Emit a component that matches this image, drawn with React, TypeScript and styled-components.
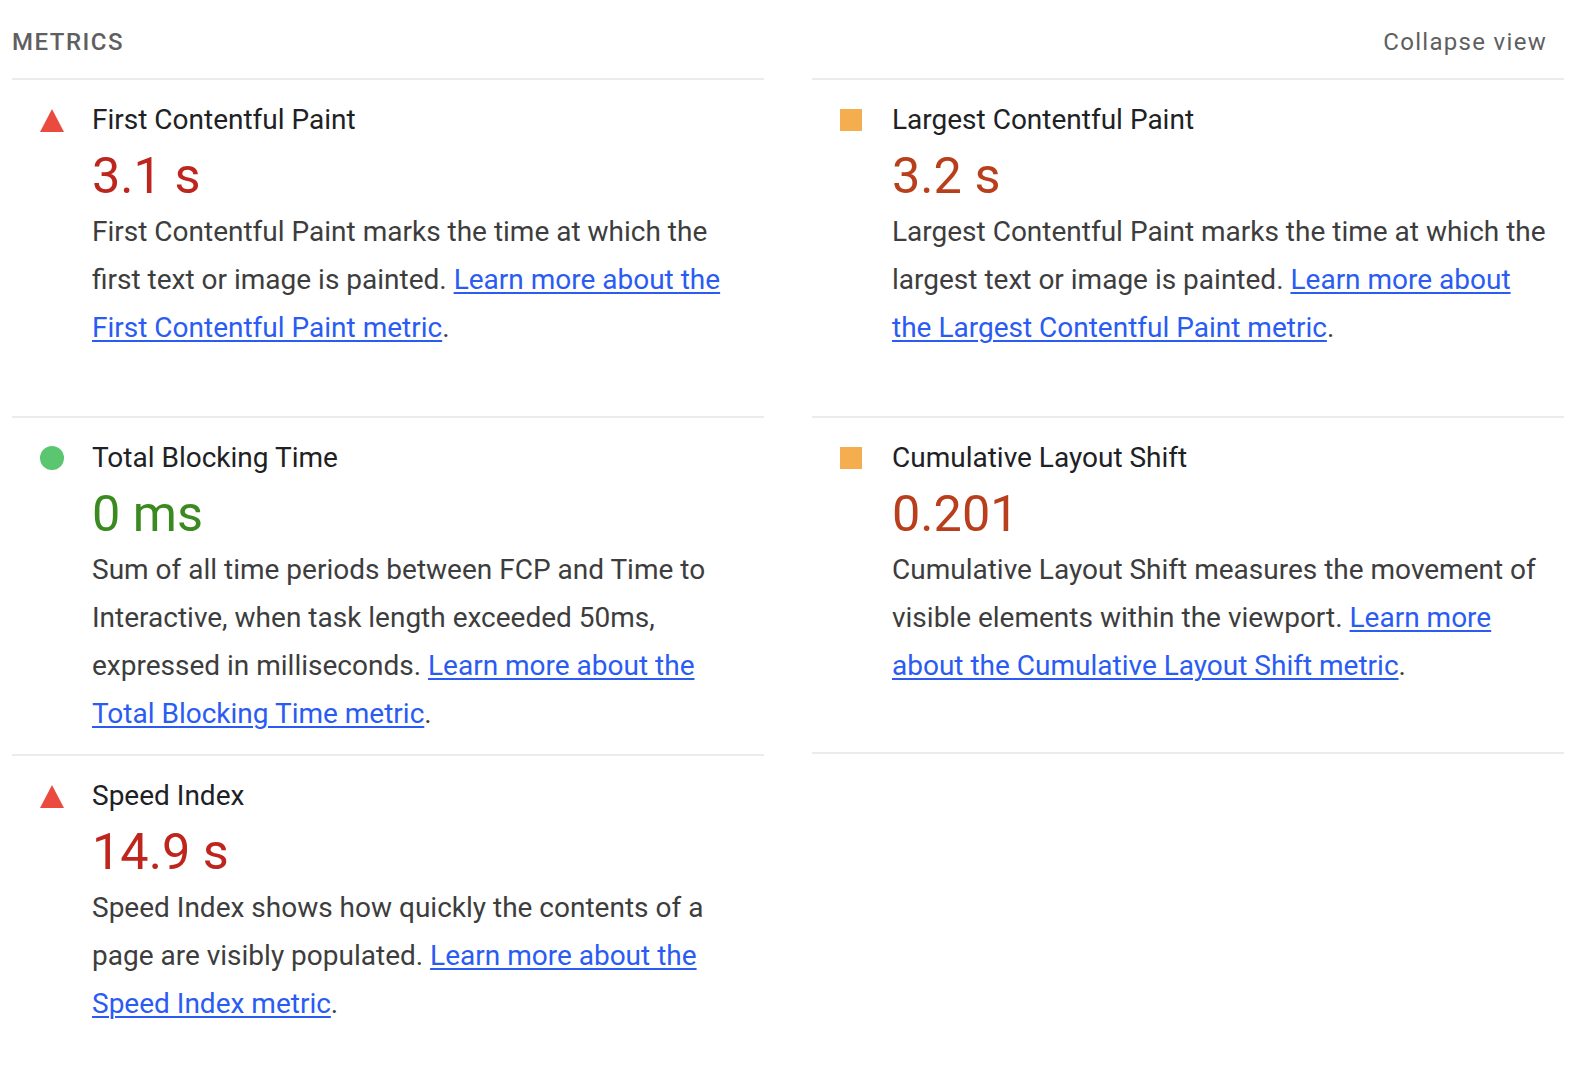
import styled, { createGlobalStyle } from 'styled-components';

const GlobalStyle = createGlobalStyle`
  html, body {
    margin: 0;
    padding: 0;
    background: #ffffff;
  }
  body {
    font-family: Roboto, 'Liberation Sans', Arial, sans-serif;
    -webkit-font-smoothing: antialiased;
  }
`;

type Rating = 'fail' | 'average' | 'pass';

const iconColors: Record<Rating, string> = {
  fail: '#eb4a3f',
  average: '#f4ae4f',
  pass: '#5ac66f',
};

const valueColors: Record<Rating, string> = {
  fail: '#bd251d',
  average: '#b93f1c',
  pass: '#3a8a20',
};

const Page = styled.div`
  padding: 0 22px 0 12px;
`;

const Header = styled.div`
  display: flex;
  justify-content: space-between;
  align-items: center;
  padding: 18px 0 12px;
  line-height: 48px;
`;

const GroupTitle = styled.span`
  font-size: 24px;
  font-weight: 500;
  letter-spacing: 1.5px;
  text-transform: uppercase;
  color: #5f5f5f;
`;

const ToggleButton = styled.button`
  appearance: none;
  background: transparent;
  border: none;
  cursor: pointer;
  padding: 0 17px 0 0;
  font-family: inherit;
  font-size: 24px;
  line-height: 48px;
  letter-spacing: 1.3px;
  color: #5f5f5f;
`;

const Grid = styled.div`
  display: grid;
  grid-template-columns: 1fr 1fr;
  grid-auto-rows: 1fr;
  column-gap: 48px;
`;

const Metric = styled.div<{ $last?: boolean }>`
  display: grid;
  grid-template-columns: 80px 1fr;
  align-content: start;
  border-top: 2px solid #ebebeb;
  border-bottom: ${(p) => (p.$last ? '2px solid #ebebeb' : 'none')};
  padding: 16px 12px 16px 0;
  line-height: 48px;
`;

const IconCell = styled.div`
  display: flex;
  align-items: center;
  height: 48px;
  padding-left: 28px;
`;

const Triangle = styled.div`
  width: 0;
  height: 0;
  border-left: 12px solid transparent;
  border-right: 12px solid transparent;
  border-bottom: 23px solid ${iconColors.fail};
`;

const Square = styled.div`
  width: 22px;
  height: 22px;
  background: ${iconColors.average};
`;

const Circle = styled.div`
  width: 24px;
  height: 24px;
  border-radius: 50%;
  background: ${iconColors.pass};
`;

const Title = styled.div`
  font-size: 28px;
  color: #202124;
`;

const Value = styled.div<{ $rating: Rating }>`
  grid-column: 2;
  margin: 8px 0;
  font-size: 50.4px;
  line-height: 48px;
  color: ${(p) => valueColors[p.$rating]};
`;

const Description = styled.div`
  grid-column: 2;
  font-size: 28px;
  line-height: 48px;
  color: #3d3d3d;
`;

const LearnLink = styled.a`
  color: #2a5cf3;
  text-decoration: underline;
  text-underline-offset: 3px;
  text-decoration-thickness: 2px;
`;

interface MetricData {
  title: string;
  value: string;
  rating: Rating;
  text: string;
  link: string;
}

const metrics: MetricData[] = [
  {
    title: 'First Contentful Paint',
    value: '3.1 s',
    rating: 'fail',
    text: 'First Contentful Paint marks the time at which the first text or image is painted. ',
    link: 'Learn more about the First Contentful Paint metric',
  },
  {
    title: 'Largest Contentful Paint',
    value: '3.2 s',
    rating: 'average',
    text: 'Largest Contentful Paint marks the time at which the largest text or image is painted. ',
    link: 'Learn more about the Largest Contentful Paint metric',
  },
  {
    title: 'Total Blocking Time',
    value: '0 ms',
    rating: 'pass',
    text: 'Sum of all time periods between FCP and Time to Interactive, when task length exceeded 50ms, expressed in milliseconds. ',
    link: 'Learn more about the Total Blocking Time metric',
  },
  {
    title: 'Cumulative Layout Shift',
    value: '0.201',
    rating: 'average',
    text: 'Cumulative Layout Shift measures the movement of visible elements within the viewport. ',
    link: 'Learn more about the Cumulative Layout Shift metric',
  },
  {
    title: 'Speed Index',
    value: '14.9 s',
    rating: 'fail',
    text: 'Speed Index shows how quickly the contents of a page are visibly populated. ',
    link: 'Learn more about the Speed Index metric',
  },
];

function ScoreIcon({ rating }: { rating: Rating }) {
  if (rating === 'fail') return <Triangle />;
  if (rating === 'average') return <Square />;
  return <Circle />;
}

export default function App() {
  return (
    <Page>
      <GlobalStyle />
      <Header>
        <GroupTitle>Metrics</GroupTitle>
        <ToggleButton>Collapse view</ToggleButton>
      </Header>
      <Grid>
        {metrics.map((m, i) => (
          <Metric key={m.title} $last={i >= metrics.length - 2}>
            <IconCell>
              <ScoreIcon rating={m.rating} />
            </IconCell>
            <Title>{m.title}</Title>
            <Value $rating={m.rating}>{m.value}</Value>
            <Description>
              {m.text}
              <LearnLink href="#">{m.link}</LearnLink>.
            </Description>
          </Metric>
        ))}
      </Grid>
    </Page>
  );
}
